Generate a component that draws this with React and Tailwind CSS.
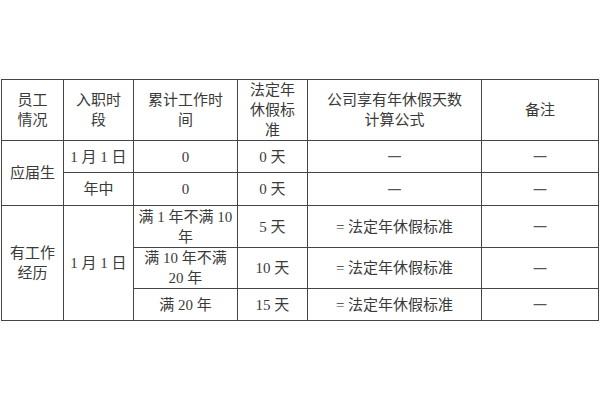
import React from 'react';

const cell = 'border border-[#444] text-center align-middle px-1 leading-[20px]';

const Dash = () => (
  <span className="text-[14px] text-[#555]" style={{ fontFamily: '"Noto Sans CJK SC", sans-serif' }}>一</span>
);

const rows = [
  { work: '满 1 年不满 10', work2: '年', days: '5 天', h: 'h-[42px]' },
  { work: '满 10 年不满', work2: '20 年', days: '10 天', h: 'h-[40px]' },
  { work: '满 20 年', work2: null, days: '15 天', h: 'h-[32px]' },
];

const App = () => {
  return (
    <div
      className="w-[600px] h-[400px] bg-white pt-[79px] pl-[1px] text-[#3a3a3a] text-[15px]"
      style={{ fontFamily: '"Liberation Serif", "Noto Sans CJK SC", serif' }}
    >
      <table className="table-fixed border-collapse w-[597px]">
        <colgroup>
          <col className="w-[62px]" />
          <col className="w-[70px]" />
          <col className="w-[104px]" />
          <col className="w-[70px]" />
          <col className="w-[174px]" />
          <col className="w-[117px]" />
        </colgroup>
        <tbody>
          <tr className="h-[61px]">
            <td className={cell}>员工<br />情况</td>
            <td className={cell}>入职时<br />段</td>
            <td className={cell}>累计工作时<br />间</td>
            <td className={cell}>法定年<br />休假标<br />准</td>
            <td className={cell}>公司享有年休假天数<br />计算公式</td>
            <td className={cell}>备注</td>
          </tr>
          <tr className="h-[32px]">
            <td className={cell} rowSpan={2}>应届生</td>
            <td className={cell}>1 月 1 日</td>
            <td className={cell}>0</td>
            <td className={cell}>0 天</td>
            <td className={cell}><Dash /></td>
            <td className={cell}><Dash /></td>
          </tr>
          <tr className="h-[33px]">
            <td className={cell}>年中</td>
            <td className={cell}>0</td>
            <td className={cell}>0 天</td>
            <td className={cell}><Dash /></td>
            <td className={cell}><Dash /></td>
          </tr>
          {rows.map((r, i) => (
            <tr key={i} className={r.h}>
              {i === 0 && (
                <>
                  <td className={cell} rowSpan={3}>有工作<br />经历</td>
                  <td className={cell} rowSpan={3}>1 月 1 日</td>
                </>
              )}
              <td className={cell}>
                {r.work}
                {r.work2 && (<><br />{r.work2}</>)}
              </td>
              <td className={cell}>{r.days}</td>
              <td className={cell}>= 法定年休假标准</td>
              <td className={cell}><Dash /></td>
            </tr>
          ))}
        </tbody>
      </table>
    </div>
  );
};

export default App;
